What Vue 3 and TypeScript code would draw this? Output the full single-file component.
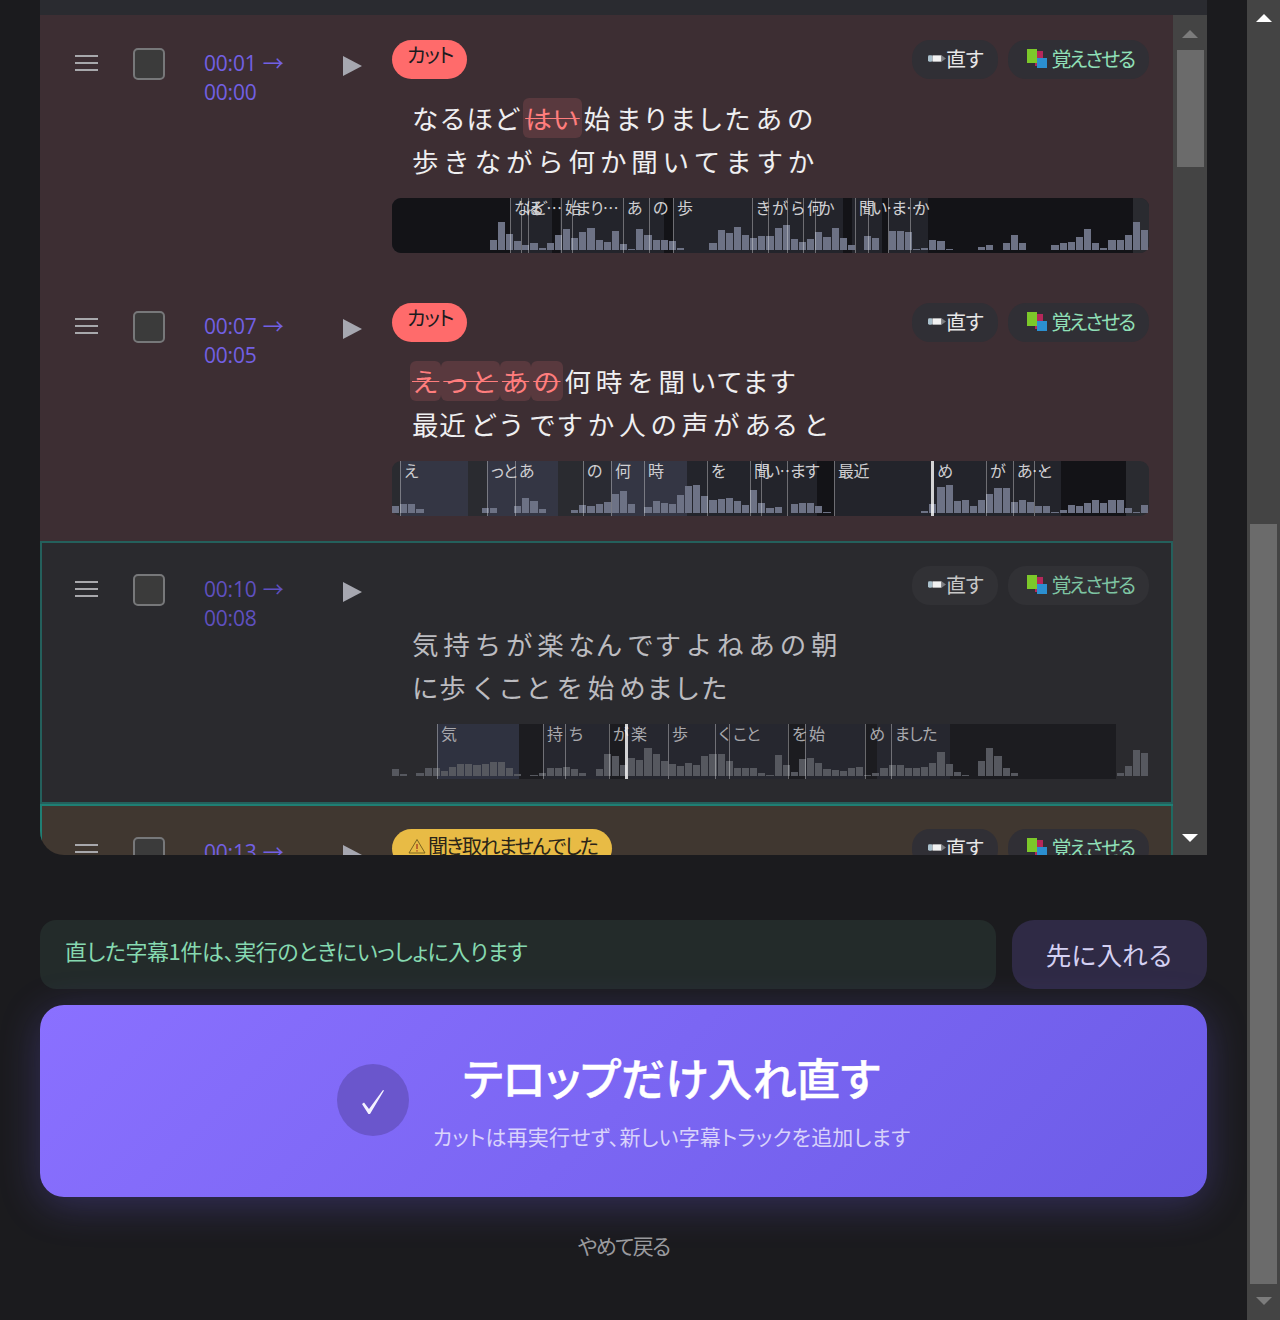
<script setup lang="ts">
interface Word { t: string; cut?: boolean }
interface Band { x: number; w: number; c: string }
interface Mark { x: number; label: string; strong?: boolean }
interface Row {
  kind: 'cut' | 'plain'
  start: string
  end: string
  tag?: string
  lines: Word[][]
  bars: number[]
  base: string
  bands: Band[]
  marks: Mark[]
}
const WAVE_WIDTH = 757
const w = (s: string): Word[] => s.split(' ').map((t) => ({ t }))

const rows: Row[] = [
  {
    kind: 'cut', start: '00:01', end: '00:00', tag: 'カット',
    lines: [
      [{ t: 'なるほど' }, { t: 'はい', cut: true }, ...w('始 まりました あ の')],
      w('歩 き な が ら 何 か 聞 い て ま す か')
    ],
    bars: [0,0,0,0,0,0,0,0,0,0,0,0,10,28,16,9,5,7,2,7,15,21,12,18,22,10,8,19,6,1,21,15,10,10,9,2,0,0,0,7,20,17,23,15,12,14,14,22,25,11,8,11,18,13,22,12,5,0,14,12,0,19,19,18,1,2,10,9,1,0,0,0,3,5,0,7,15,7,0,0,0,5,7,8,13,21,7,2,10,10,15,28,20],
    base: '#23242b',
    bands: [
      { x: 0, w: 118, c: '#131317' }, { x: 160, w: 8, c: '#131317' }, { x: 272, w: 9, c: '#131317' },
      { x: 451, w: 9, c: '#131317' }, { x: 490, w: 6, c: '#131317' }, { x: 536, w: 205, c: '#131317' },
      { x: 741, w: 16, c: '#2a2b30' }
    ],
    marks: [
      { x: 118, label: 'なる' }, { x: 129, label: 'ほ' }, { x: 136, label: 'ど…' }, { x: 169, label: '始' },
      { x: 180, label: 'まり…' }, { x: 231, label: 'あ' }, { x: 257, label: 'の' }, { x: 281, label: '歩' },
      { x: 360, label: 'き' }, { x: 376, label: 'が' }, { x: 395, label: 'ら' }, { x: 411, label: '何' },
      { x: 423, label: 'か' }, { x: 463, label: '聞' }, { x: 476, label: 'い…' }, { x: 496, label: 'ま…' },
      { x: 518, label: 'か' }
    ]
  },
  {
    kind: 'cut', start: '00:07', end: '00:05', tag: 'カット',
    lines: [
      [{ t: 'え', cut: true }, { t: 'っと', cut: true }, { t: 'あ', cut: true }, { t: 'の', cut: true }, ...w('何 時 を 聞 いてます')],
      w('最近 どう です か 人 の 声 が ある と')
    ],
    bars: [7,9,9,4,0,0,0,0,0,0,0,5,5,0,0,7,15,12,4,0,0,0,3,8,7,9,11,19,22,9,0,6,12,10,9,18,27,28,17,13,14,15,12,8,23,10,5,6,0,9,10,10,7,1,0,0,0,0,0,0,0,0,0,0,0,2,9,26,28,12,13,7,13,19,25,25,11,13,11,7,7,1,3,8,7,10,13,10,13,13,5,1,8],
    base: '#2a2b30',
    bands: [
      { x: 8, w: 68, c: '#343644' }, { x: 95, w: 71, c: '#343644' }, { x: 191, w: 28, c: '#2a2b33' },
      { x: 219, w: 76, c: '#343644' }, { x: 295, w: 130, c: '#23242b' }, { x: 425, w: 17, c: '#131317' },
      { x: 442, w: 227, c: '#23242b' }, { x: 669, w: 65, c: '#131317' }
    ],
    marks: [
      { x: 8, label: 'え' }, { x: 95, label: 'っと' }, { x: 123, label: 'あ' }, { x: 191, label: 'の' },
      { x: 219, label: '何' }, { x: 252, label: '時' }, { x: 315, label: 'を' }, { x: 358, label: '聞' },
      { x: 369, label: 'い…' }, { x: 395, label: 'ます' }, { x: 442, label: '最近' },
      { x: 539, label: 'め', strong: true }, { x: 594, label: 'が' }, { x: 621, label: 'あ…' }, { x: 642, label: 'と' }
    ]
  },
  {
    kind: 'plain', start: '00:10', end: '00:08',
    lines: [
      w('気 持 ち が 楽 なん です よ ね あ の 朝'),
      w('に歩 くこと を 始 めました')
    ],
    bars: [7,2,0,3,8,8,5,9,12,12,11,12,14,14,8,2,0,1,3,8,8,9,7,3,0,7,22,20,11,18,16,28,22,15,12,10,13,11,20,22,22,15,8,8,8,3,1,21,11,4,17,18,13,7,6,5,8,9,1,3,8,11,11,8,8,9,13,24,12,4,1,0,15,28,20,8,3,0,0,0,0,0,0,0,0,0,0,0,0,3,10,26,23],
    base: 'transparent',
    bands: [
      { x: 45, w: 82, c: '#2f3240' }, { x: 127, w: 24, c: '#1c1c20' }, { x: 151, w: 66, c: '#26272f' },
      { x: 217, w: 16, c: '#1c1c20' }, { x: 233, w: 163, c: '#26272f' }, { x: 396, w: 17, c: '#1c1c20' },
      { x: 413, w: 60, c: '#26272f' }, { x: 473, w: 12, c: '#1c1c20' }, { x: 485, w: 73, c: '#26272f' },
      { x: 558, w: 166, c: '#1c1c20' }
    ],
    marks: [
      { x: 45, label: '気' }, { x: 151, label: '持' }, { x: 173, label: 'ち' }, { x: 217, label: 'が' },
      { x: 233, label: '楽', strong: true }, { x: 276, label: '歩' }, { x: 323, label: 'く' }, { x: 337, label: 'こと' },
      { x: 396, label: 'を' }, { x: 413, label: '始' }, { x: 473, label: 'め' }, { x: 499, label: 'ました' }
    ]
  }
]
</script>

<template>
  <div class="page">
    <main class="main">
      <section class="panel">
        <div class="panel-top"></div>
        <div class="panel-body">
          <div class="list">
            <article
              v-for="row in rows"
              :key="row.start"
              class="row"
              :class="row.kind === 'cut' ? 'row-cut' : 'row-plain'"
            >
              <div class="col-handle"><span class="handle"><i></i><i></i><i></i></span></div>
              <div class="col-check"><span class="check"></span></div>
              <div class="col-time">{{ row.start }} <span class="arrow">→</span><br />{{ row.end }}</div>
              <div class="col-play"><span class="play"></span></div>
              <div class="content">
                <div class="head">
                  <span v-if="row.tag" class="tag">{{ row.tag }}</span>
                  <span v-else></span>
                  <div class="actions">
                    <button class="pill">
                      <svg class="pencil" viewBox="0 0 20 10" width="18" height="9">
                        <rect x="0" y="1.5" width="5" height="7" rx="1.5" fill="#a9c0cc" />
                        <rect x="5" y="1.5" width="10" height="7" fill="#f2f2f2" />
                        <path d="M15 1.5 L20 5 L15 8.5 Z" fill="#7d7d80" />
                      </svg><span class="pill-text">直す</span>
                    </button>
                    <button class="pill pill-green">
                      <svg class="books" viewBox="0 0 20 20" width="20" height="20">
                        <rect x="8" y="2" width="8" height="15" fill="#b5285a" />
                        <rect x="10" y="9" width="10" height="10" fill="#2b8fd0" />
                        <rect x="0" y="0" width="10" height="14" fill="#7cc82a" />
                      </svg><span class="pill-text">覚えさせる</span>
                    </button>
                  </div>
                </div>
                <div class="text">
                  <div v-for="(line, li) in row.lines" :key="li" class="line">
                    <span v-for="(word, wi) in line" :key="wi" class="word" :class="{ cut: word.cut }">{{ word.t }}</span>
                  </div>
                </div>
                <div class="wave" :style="{ background: row.base }">
                  <span
                    v-for="(b, bi) in row.bands"
                    :key="'b' + bi"
                    class="band"
                    :class="{ 'band-start': b.x === 0, 'band-end': b.x + b.w === WAVE_WIDTH }"
                    :style="{ left: b.x + 'px', width: b.w + 'px', background: b.c }"
                  ></span>
                  <div class="bars">
                    <span v-for="(h, hi) in row.bars" :key="hi" class="bar" :style="{ height: h + 'px' }"></span>
                  </div>
                  <span
                    v-for="(m, mi) in row.marks"
                    :key="'m' + mi"
                    class="mark"
                    :class="{ strong: m.strong }"
                    :style="{ left: m.x + 'px' }"
                  >{{ m.label }}</span>
                </div>
              </div>
            </article>

            <article class="row row-warn">
              <div class="col-handle"><span class="handle"><i></i><i></i><i></i></span></div>
              <div class="col-check"><span class="check"></span></div>
              <div class="col-time">00:13 <span class="arrow">→</span></div>
              <div class="col-play"><span class="play"></span></div>
              <div class="content">
                <div class="head">
                  <span class="tag tag-warn">
                    <svg viewBox="0 0 18 16" width="18" height="16">
                      <path d="M9 1.5 L17 15 H1 Z" fill="none" stroke="#7a6420" stroke-width="1" />
                      <path d="M9 6 V11 M9 12.2 V13.6" stroke="#a03020" stroke-width="1.2" />
                    </svg>聞き取れませんでした
                  </span>
                  <div class="actions">
                    <button class="pill">
                      <svg class="pencil" viewBox="0 0 20 10" width="18" height="9">
                        <rect x="0" y="1.5" width="5" height="7" rx="1.5" fill="#a9c0cc" />
                        <rect x="5" y="1.5" width="10" height="7" fill="#f2f2f2" />
                        <path d="M15 1.5 L20 5 L15 8.5 Z" fill="#7d7d80" />
                      </svg><span class="pill-text">直す</span>
                    </button>
                    <button class="pill pill-green">
                      <svg class="books" viewBox="0 0 20 20" width="20" height="20">
                        <rect x="8" y="2" width="8" height="15" fill="#b5285a" />
                        <rect x="10" y="9" width="10" height="10" fill="#2b8fd0" />
                        <rect x="0" y="0" width="10" height="14" fill="#7cc82a" />
                      </svg><span class="pill-text">覚えさせる</span>
                    </button>
                  </div>
                </div>
              </div>
            </article>
          </div>
          <div class="list-bar">
            <span class="tri up dim"></span>
            <span class="list-thumb"></span>
            <span class="tri down"></span>
          </div>
        </div>
      </section>

      <div class="notice-row">
        <div class="notice">直した字幕1件は、実行のときにいっしょに入ります</div>
        <button class="first">先に入れる</button>
      </div>

      <button class="go">
        <span class="go-circle">
          <svg viewBox="0 0 24 26" width="24" height="26">
            <path d="M1 15 L3 13.5 L8 20 L22 1 L23 1.6 L9 25 L7.4 25 Z" fill="#f4f2ff" />
          </svg>
        </span>
        <span class="go-text">
          <span class="go-title">テロップだけ入れ直す</span>
          <span class="go-sub">カットは再実行せず、新しい字幕トラックを追加します</span>
        </span>
      </button>

      <div class="cancel">やめて戻る</div>
    </main>

    <aside class="page-bar">
      <span class="tri up"></span>
      <span class="page-thumb"></span>
      <span class="tri down dim"></span>
    </aside>
  </div>
</template>

<style scoped>
.page {
  display: flex;
  width: 1280px;
  height: 1320px;
  overflow: hidden;
  background: #1b1b1e;
  font-family: "Noto Sans CJK JP", "Noto Sans", sans-serif;
  font-feature-settings: "palt";
}
.main {
  flex: 1;
  padding: 0 40px;
  min-width: 0;
  display: flex;
  flex-direction: column;
}
.panel {
  height: 855px;
  display: flex;
  flex-direction: column;
  overflow: hidden;
  border-radius: 0 0 0 24px;
  flex: none;
}
.panel-top {
  height: 15px;
  background: #2a2b30;
  flex: none;
}
.panel-body {
  flex: 1;
  display: flex;
  min-height: 0;
}
.list {
  flex: 1;
  min-width: 0;
  overflow: hidden;
}
.row {
  height: 263px;
  box-sizing: border-box;
  display: flex;
  padding: 0 24px 0 35px;
}
.row-cut { background: #3d2e33; }
.row-plain {
  background: #2a2a2e;
  box-shadow: inset 0 0 0 2px #24605c;
}
.row-warn {
  background: #403730;
  box-shadow: inset 2px 2px 0 #1f7f74, inset -2px 0 0 #1f6a62;
}
.col-handle { width: 58px; flex: none; padding-top: 40px; box-sizing: border-box; }
.handle { display: flex; flex-direction: column; gap: 5px; width: 23px; }
.handle i { display: block; height: 2px; background: #a8a8ac; }
.col-check { width: 71px; flex: none; padding-top: 33px; box-sizing: border-box; }
.check {
  display: block;
  width: 32px;
  height: 32px;
  box-sizing: border-box;
  border: 2px solid #77787a;
  border-radius: 5px;
  background: #3b3b3b;
}
.col-time {
  width: 139px;
  flex: none;
  padding-top: 33px;
  box-sizing: border-box;
  font-family: "Open Sans", "Noto Sans CJK JP", sans-serif;
  font-size: 21px;
  line-height: 29px;
  letter-spacing: -0.2px;
  color: #7260e4;
}
.arrow { font-family: "Noto Sans CJK JP", sans-serif; margin-left: 1px; }
.col-play { width: 49px; flex: none; padding-top: 41px; box-sizing: border-box; }
.play {
  display: block;
  width: 0;
  height: 0;
  border-left: 19px solid #a6a7b0;
  border-top: 10.5px solid transparent;
  border-bottom: 10.5px solid transparent;
}
.content { flex: 1; min-width: 0; padding-top: 25px; }
.head {
  height: 39px;
  display: flex;
  justify-content: space-between;
  align-items: flex-start;
}
.tag {
  height: 39px;
  box-sizing: border-box;
  padding: 0 14px 0 15px;
  border-radius: 20px;
  background: #ff6b6b;
  color: #1b1b1e;
  font-size: 20px;
  line-height: 30px;
  letter-spacing: -1.2px;
  white-space: nowrap;
}
.tag-warn {
  display: flex;
  align-items: center;
  background: #e8bb45;
  color: #2a2418;
  padding: 0 15px 5px 16px;
  letter-spacing: -1.75px;
}
.tag-warn svg { margin-right: 2px; }
.actions { display: flex; gap: 10px; }
.pill {
  height: 39px;
  display: flex;
  align-items: center;
  padding: 0 15px 2px 16px;
  border: none;
  border-radius: 18px;
  background: #302f35;
  color: #e8e8e8;
  font-family: inherit;
  font-feature-settings: "palt";
  font-size: 20px;
  letter-spacing: -0.4px;
  white-space: nowrap;
}
.pill-green { color: #90e0b8; padding-left: 19px; letter-spacing: -2.1px; }
.books { margin-right: 4px; }
.row-plain .pill { background: #313135; color: #c8c8c8; }
.row-plain .pill-green { color: #7ec4a2; }
.text {
  margin-top: 17px;
  padding-left: 18px;
  height: 86px;
  color: #efeff1;
  font-size: 26.5px;
  letter-spacing: 0.8px;
  font-feature-settings: normal;
}
.row-plain .text { color: #bcbcc0; }
.row-plain .col-time { color: #5f50c0; }
.line { height: 43px; line-height: 43px; white-space: nowrap; }
.word {
  display: inline-block;
  padding: 0 2px;
  line-height: 40px;
  border-radius: 6px;
}
.word.cut {
  background: #59393e;
  color: #ff7d7d;
  text-decoration: line-through;
  text-decoration-thickness: 1px;
}
.wave {
  position: relative;
  margin-top: 16px;
  height: 55px;
  border-radius: 9px;
}
.band { position: absolute; top: 0; bottom: 0; }
.band-start { border-radius: 9px 0 0 9px; }
.band-end { border-radius: 0 9px 9px 0; }
.bars {
  position: absolute;
  inset: 0 0 3px 0;
  display: flex;
  align-items: flex-end;
}
.bar {
  flex: 1;
  margin-right: 1px;
  background: #6d7285;
}
.row-plain .bar { background: #56585f; }
.mark {
  position: absolute;
  top: 0;
  bottom: 0;
  border-left: 1.5px solid rgba(255, 255, 255, 0.34);
  padding-left: 3px;
  font-size: 16px;
  line-height: 18px;
  letter-spacing: -0.6px;
  color: #cfcfd2;
  white-space: nowrap;
}
.mark.strong { border-left-color: rgba(255, 255, 255, 0.8); border-left-width: 3px; }
.row-plain .mark { color: #a9a9ad; }
.list-bar {
  width: 34px;
  flex: none;
  background: #444;
  display: flex;
  flex-direction: column;
  align-items: center;
}
.list-bar .up { margin-top: 15px; }
.list-thumb {
  display: block;
  width: 27px;
  height: 117px;
  margin-top: 12px;
  background: #6b6b6b;
}
.list-bar .down { margin-top: auto; margin-bottom: 13px; }
.tri { display: block; width: 0; height: 0; border-left: 8px solid transparent; border-right: 8px solid transparent; }
.tri.up { border-bottom: 8px solid #fff; }
.tri.down { border-top: 8px solid #fff; }
.tri.up.dim { border-bottom-color: #7c7c7c; }
.tri.down.dim { border-top-color: #7c7c7c; }
.notice-row {
  display: flex;
  gap: 16px;
  margin-top: 65px;
  flex: none;
}
.notice {
  flex: 1;
  height: 69px;
  box-sizing: border-box;
  padding: 0 25px 9px;
  display: flex;
  align-items: center;
  border-radius: 16px;
  background: #232b2a;
  color: #86d9b0;
  font-size: 22px;
  letter-spacing: -0.4px;
}
.first {
  width: 195px;
  height: 69px;
  padding: 0 0 2px;
  border: none;
  border-radius: 22px;
  background: #2f2a45;
  color: #d4d0f2;
  font-family: inherit;
  font-size: 25.5px;
}
.go {
  margin-top: 16px;
  height: 192px;
  flex: none;
  display: flex;
  align-items: center;
  justify-content: center;
  gap: 24px;
  border: none;
  border-radius: 24px;
  background: linear-gradient(135deg, #8a70ff, #6c5ce7);
  box-shadow: 0 8px 40px rgba(108, 92, 231, 0.3);
  font-family: inherit;
  font-feature-settings: "palt";
}
.go-circle {
  width: 72px;
  height: 72px;
  margin-bottom: 2px;
  border-radius: 50%;
  background: #6a56cc;
  display: flex;
  align-items: center;
  justify-content: center;
  padding-top: 4px;
  box-sizing: border-box;
}
.go-text { display: flex; flex-direction: column; align-items: center; padding-bottom: 5px; }
.go-title {
  color: #fff;
  font-size: 44px;
  font-weight: 500;
  -webkit-text-stroke: 0.5px #fff;
  line-height: 64px;
}
.go-sub {
  margin-top: 11px;
  color: rgba(255, 255, 255, 0.72);
  font-size: 21px;
  letter-spacing: 0.2px;
  line-height: 32px;
}
.cancel {
  margin-top: 34px;
  text-align: center;
  color: #9a9a9e;
  font-size: 21px;
  letter-spacing: -1.6px;
  line-height: 28px;
}
.page-bar {
  width: 33px;
  flex: none;
  background: #444;
  display: flex;
  flex-direction: column;
  align-items: center;
}
.page-bar .up { margin-top: 14px; }
.page-thumb {
  display: block;
  width: 27px;
  height: 760px;
  margin-top: 502px;
  background: #6b6b6b;
}
.page-bar .down { margin-top: auto; margin-bottom: 15px; }
</style>

<style>
html, body { background: #1b1b1e; }
</style>
